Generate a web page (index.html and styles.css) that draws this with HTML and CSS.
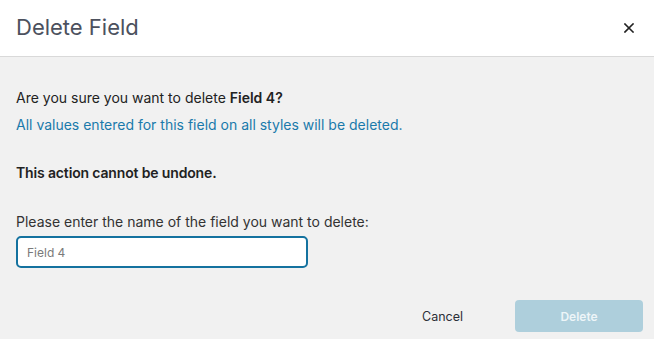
FILE: index.html
```html
<!DOCTYPE html>
<html lang="en">
<head>
<meta charset="utf-8">
<title>Delete Field</title>
<link rel="stylesheet" href="styles.css">
</head>
<body>
<div class="modal">
  <header class="modal-header">
    <h1 class="modal-title">Delete Field</h1>
    <button class="close-btn" aria-label="Close">
      <svg width="10" height="10" viewBox="0 0 10 10"><path d="M1 1L9 9M9 1L1 9" stroke="#222" stroke-width="1.6" stroke-linecap="square"/></svg>
    </button>
  </header>
  <main class="modal-body">
    <p class="line">Are you sure you want to delete <strong>Field 4?</strong></p>
    <p class="line info">All values entered for this field on all styles will be deleted.</p>
    <p class="warning">This action cannot be undone.</p>
    <label class="label" for="fname">Please enter the name of the field you want to delete:</label>
    <input id="fname" class="text-input" type="text" placeholder="Field 4">
  </main>
  <footer class="modal-footer">
    <button class="btn-cancel">Cancel</button>
    <button class="btn-delete" disabled>Delete</button>
  </footer>
</div>
</body>
</html>
```
FILE: styles.css
```css
* { box-sizing: border-box; }
html, body { margin: 0; padding: 0; }
body {
  font-family: Inter, "Noto Sans", sans-serif;
  background: #f1f1f1;
  width: 654px;
  height: 339px;
  overflow: hidden;
}
.modal { display: flex; flex-direction: column; height: 339px; }
.modal-header {
  height: 57px;
  background: #fff;
  border-bottom: 1px solid #d9d9d9;
  display: flex;
  align-items: center;
  justify-content: space-between;
  padding: 0 16px 2px 16px;
}
.modal-title {
  margin: 0;
  font-size: 22px;
  font-weight: 400;
  color: #4c515e;
}
.close-btn {
  border: 0;
  background: none;
  padding: 0;
  width: 20px;
  height: 20px;
  display: flex;
  align-items: center;
  justify-content: center;
  margin-right: -1px;
  margin-top: 2px;
}
.modal-body {
  padding: 32px 16px 0 16px;
  display: flex;
  flex-direction: column;
  align-items: flex-start;
}
.line {
  margin: 0;
  font-size: 14px;
  line-height: 18px;
  color: #222;
}
.line strong { font-weight: 600; }
.line.info { color: #1a7aab; margin-top: 9px; }
.warning {
  margin: 30px 0 0 0;
  font-size: 14px;
  line-height: 18px;
  font-weight: 600;
  letter-spacing: -0.15px;
  color: #222;
}
.label {
  margin-top: 31px;
  font-size: 14px;
  line-height: 18px;
  color: #333;
}
.text-input {
  margin-top: 5px;
  width: 292px;
  height: 32px;
  border: 2px solid #14729f;
  border-radius: 5px;
  background: #fff;
  padding: 0 9px;
  font-family: inherit;
  font-size: 12px;
  color: #222;
  outline: none;
}
.text-input::placeholder { color: #7a7a7a; }
.modal-footer {
  margin-top: auto;
  display: flex;
  justify-content: flex-end;
  align-items: center;
  gap: 52px;
  padding: 0 11px 7px 0;
}
.btn-cancel {
  border: 0;
  background: none;
  font-family: inherit;
  font-size: 12.5px;
  color: #2b2f38;
  padding: 0;
}
.btn-delete {
  width: 128px;
  height: 32px;
  border: 0;
  border-radius: 4px;
  background: #aecfdc;
  color: #edf5f8;
  font-family: inherit;
  font-size: 12px;
  font-weight: 600;
}
```
